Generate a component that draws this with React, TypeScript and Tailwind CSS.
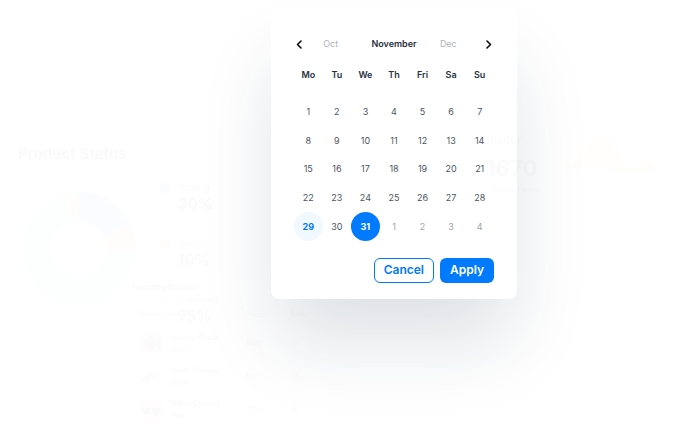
import React, { useState } from 'react';

const weekdays = ['Mo', 'Tu', 'We', 'Th', 'Fri', 'Sa', 'Su'];

const days = [
  ...Array.from({ length: 31 }, (_, i) => ({ day: i + 1, current: true })),
  ...Array.from({ length: 4 }, (_, i) => ({ day: i + 1, current: false })),
];

const statuses = [
  { label: 'Waiting', value: '30%', color: 'bg-blue-600' },
  { label: 'Return', value: '10%', color: 'bg-orange-400' },
  { label: 'Delivered', value: '75%', color: 'bg-cyan-100' },
];

const products = [
  { name: 'Luxury Watch', type: 'Watch', price: '$120', sold: '45' },
  { name: 'Study Glasses', type: 'Glass', price: '$40', sold: '41' },
  { name: 'Robot Glasses', type: 'Glass', price: '$250', sold: '36' },
];

const Donut = () => (
  <svg className="w-[114px] h-[114px]" viewBox="0 0 114 114" fill="none" aria-hidden="true">
    <circle cx="57" cy="57" r="42" stroke="#c8ffff" strokeWidth="28" />
    <path d="M57 57V0A57 57 0 0 1 108 31Z" fill="#4f8dff" />
    <path d="M57 57L108 31A57 57 0 0 1 114 61Z" fill="#ffb56b" />
    <path d="M57 57L44 5A57 57 0 0 1 57 2Z" fill="#ffdcc0" />
    <circle cx="57" cy="57" r="28" fill="white" />
  </svg>
);

const ProductImage = ({ index }: { index: number }) => (
  <svg className="w-6 h-6 shrink-0" viewBox="0 0 24 24" aria-hidden="true">
    {index === 0 && (
      <>
        <rect width="24" height="22" rx="4" fill="#ffd9a0" />
        <circle cx="11" cy="11" r="7" fill="#475569" />
        <rect x="18" y="6" width="4" height="11" fill="#475569" />
      </>
    )}
    {index === 1 && <path d="M3 15q3-4 7-3 5-5 10-5M5 18q4-1 6-5 5 0 9-5" stroke="#334155" strokeWidth="2" fill="none" />}
    {index === 2 && (
      <>
        <circle cx="12" cy="12" r="12" fill="#ff9aa8" />
        <path d="M3 10h8q0 7-4 7t-4-7ZM13 10h8q0 7-4 7t-4-7Z" fill="#1f2937" />
      </>
    )}
  </svg>
);

// Faded dashboard widgets floating around the date picker
const Widgets = () => (
  <div className="absolute inset-0 overflow-hidden pointer-events-none text-gray-900 opacity-[0.016]">
    <section className="absolute left-[18px] top-36">
      <h2 className="text-[15px] leading-5 font-bold">Product Status</h2>
      <div className="flex items-start gap-6">
        <div className="pt-7 pl-1"><Donut /></div>
        <ul className="pt-4 flex flex-col gap-6">
          {statuses.map((status) => (
            <li key={status.label} className="flex gap-2">
              <span className={`mt-[3px] w-2.5 h-2.5 rounded-sm ${status.color}`} />
              <div>
                <p className="text-[9px] leading-4">{status.label}</p>
                <p className="text-[15px] leading-4 font-bold">{status.value}</p>
              </div>
            </li>
          ))}
        </ul>
      </div>
    </section>

    <section className="absolute left-[131px] top-[279px]">
      <h2 className="text-[8px] leading-4 font-bold">Trending Product</h2>
      <table className="ml-2 mt-3.5 text-left text-[7px] leading-3">
        <thead>
          <tr>
            <th className="w-[107px] pb-1.5 font-medium">Product Name</th>
            <th className="w-11 pb-1.5 font-medium">Price</th>
            <th className="pb-1.5 font-medium">Sold</th>
          </tr>
        </thead>
        <tbody>
          {products.map((product, i) => (
            <tr key={product.name} className="h-[33px]">
              <td>
                <div className="flex items-center gap-2">
                  <ProductImage index={i} />
                  <div className="whitespace-nowrap">
                    <p className="font-bold">{product.name}</p>
                    <p>{product.type}</p>
                  </div>
                </div>
              </td>
              <td>{product.price}</td>
              <td>{product.sold}</td>
            </tr>
          ))}
        </tbody>
      </table>
    </section>

    <section className="absolute left-[486px] top-32 flex gap-6">
      <div>
        <h2 className="text-xs leading-6">Visitor</h2>
        <p className="text-[22px] leading-8 font-bold">1670</p>
        <p className="text-[7px] leading-3">+ 15% last week</p>
      </div>
      <svg className="mt-2 w-24 h-10" viewBox="0 0 96 40" aria-hidden="true">
        <path d="M0 32C18 28 22 2 40 2S54 32 66 32 82 12 94 38" fill="#fff0b0" />
      </svg>
    </section>
  </div>
);

const Chevron = ({ d }: { d: string }) => (
  <svg className="w-2.5 h-2.5" viewBox="0 0 10 10" fill="none" stroke="currentColor" strokeWidth="1.5" strokeLinecap="round" strokeLinejoin="round" aria-hidden="true">
    <path d={d} />
  </svg>
);

const DatePicker = () => {
  const [selected, setSelected] = useState(30);

  const dayStyle = (index: number, current: boolean) => {
    if (index === selected) return 'bg-[#007aff] text-white font-bold';
    if (index === 28) return 'bg-[#f2f8ff] text-[#007aff] font-bold';
    return current ? 'text-[#4b5563]' : 'text-[#a0a3a8]';
  };

  return (
    <section className="w-[246px] px-[23px] pt-7 pb-4 rounded-lg bg-white text-[9px] leading-4 text-[#27303f] shadow-[0_48px_72px_-8px_rgba(25,50,75,0.15)]">
      <header className="flex items-center justify-between">
        <button type="button" aria-label="Previous month" className="text-black"><Chevron d="M7 2L3.5 5.5 7 9" /></button>
        <button type="button" className="text-[#b0b3b8]">Oct</button>
        <h1 className="ml-3.5 mr-1 font-semibold">November</h1>
        <button type="button" className="mr-2 text-[#b0b3b8]">Dec</button>
        <button type="button" aria-label="Next month" className="text-black"><Chevron d="M3 2L6.5 5.5 3 9" /></button>
      </header>

      <div className="mt-[15px] grid grid-cols-7 text-center font-semibold">
        {weekdays.map((name) => (
          <span key={name}>{name}</span>
        ))}
      </div>

      <div className="mt-[15px] grid grid-cols-7">
        {days.map(({ day, current }, i) => (
          <button
            key={i}
            type="button"
            onClick={() => setSelected(i)}
            className={`aspect-square rounded-full ${dayStyle(i, current)}`}
          >
            {day}
          </button>
        ))}
      </div>

      <footer className="mt-[17px] flex justify-end gap-1.5 text-xs font-semibold">
        <button type="button" className="h-[25px] px-[9px] rounded-md border border-[#007aff] text-[#007aff]">Cancel</button>
        <button type="button" className="h-[25px] px-2.5 rounded-md bg-[#007aff] text-white">Apply</button>
      </footer>
    </section>
  );
};

const App = () => (
  <main className="relative min-h-screen overflow-hidden bg-white pt-2 pl-[104px] flex justify-center items-start font-[Inter,sans-serif]">
    <DatePicker />
    <Widgets />
  </main>
);

export default App;
